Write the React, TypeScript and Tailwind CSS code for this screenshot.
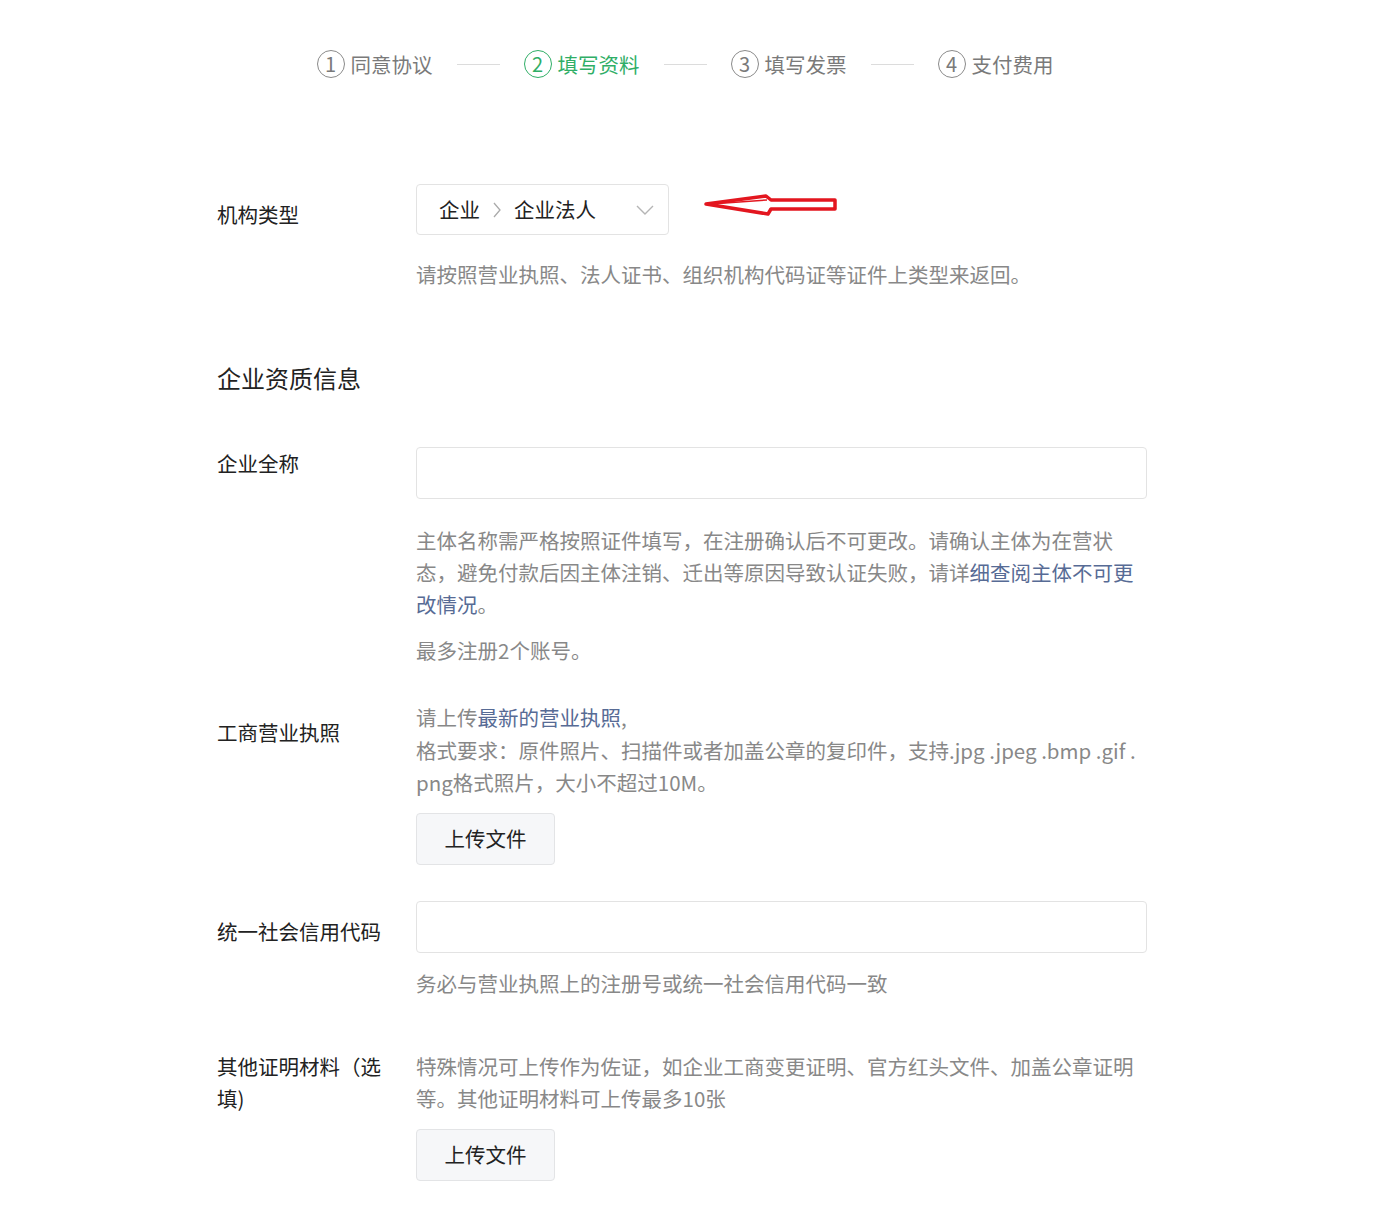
import React from "react";

const steps = ["同意协议", "填写资料", "填写发票", "支付费用"];

function Steps() {
  return (
    <div className="flex items-center justify-center gap-6 pl-[6px] pt-[48px]">
      {steps.map((s, i) => {
        const active = i === 1;
        return (
          <React.Fragment key={s}>
            {i > 0 && <div className="h-px w-[43px] bg-[#dcdcdc]" />}
            <div className="flex items-center gap-[6px]">
              <span
                className={
                  active
                    ? "flex h-[28px] w-[28px] items-center justify-center rounded-full border-[1.5px] border-[#2fae66] text-[20px] leading-none text-[#2fae66]"
                    : "flex h-[28px] w-[28px] items-center justify-center rounded-full border-[1.5px] border-[#8a8a8a] text-[20px] leading-none text-[#7a7a7a]"
                }
              >
                {i + 1}
              </span>
              <span
                className={
                  active
                    ? "text-[20.5px] leading-[32px] text-[#2fae66]"
                    : "text-[20.5px] leading-[32px] text-[#7a7a7a]"
                }
              >
                {s}
              </span>
            </div>
          </React.Fragment>
        );
      })}
    </div>
  );
}

function RedArrow() {
  return (
    <svg width="136" height="24" viewBox="0 0 136 24" className="ml-[34px] -mt-[10px] shrink-0">
      <path
        d="M3 11 L63 3 L68 7 L132 7 L132 16 L68 16 L65 21 Z"
        fill="white"
        stroke="#e3161f"
        strokeWidth="3.5"
        strokeLinejoin="round"
      />
      <path d="M8 11 L64 7" stroke="#e3161f" strokeWidth="1.5" fill="none" />
    </svg>
  );
}

function UploadButton() {
  return (
    <button className="h-[52px] w-[139px] rounded-[4px] border border-[#e3e4e6] bg-[#f6f7f9] text-[20.5px] text-[#222]">
      上传文件
    </button>
  );
}

const label = "w-[199px] shrink-0 pr-[20px] text-[20.5px] leading-[32px] text-[#222]";
const help = "text-[20.5px] leading-[32px] text-[#888]";
const link = "text-[#576b95]";

export default function App() {
  return (
    <div
      className="min-h-[1224px] bg-white"
      style={{ fontFamily: '"Noto Sans CJK SC", "Noto Sans", sans-serif' }}
    >
      <div className="mx-[217px] w-[930px] pb-[44px]">
        <Steps />

        {/* 机构类型 */}
        <div className="mt-[104px] flex">
          <div className={`${label} pt-[14px]`}>机构类型</div>
          <div className="flex-1">
            <div className="flex items-center">
              <div className="flex h-[51px] w-[253px] items-center rounded-[4px] border border-[#e3e3e3] pl-[22px] pr-[14px] text-[20.5px] text-[#222]">
                <span>企业</span>
                <svg width="10" height="16" viewBox="0 0 10 16" className="mx-[12px]">
                  <path d="M2 1 L8 8 L2 15" stroke="#aaa" strokeWidth="1.3" fill="none" />
                </svg>
                <span>企业法人</span>
                <svg width="18" height="10" viewBox="0 0 18 10" className="ml-auto">
                  <path d="M1 1 L9 9 L17 1" stroke="#b5b5b5" strokeWidth="1.4" fill="none" />
                </svg>
              </div>
              <RedArrow />
            </div>
            <p className={`${help} mt-[23px]`}>
              请按照营业执照、法人证书、组织机构代码证等证件上类型来返回。
            </p>
          </div>
        </div>

        <h2 className="mt-[72px] text-[24px] leading-[32px] font-normal text-[#222]">企业资质信息</h2>

        {/* 企业全称 */}
        <div className="mt-[53px] flex">
          <div className={label}>企业全称</div>
          <div className="flex-1">
            <div className="h-[52px] w-[731px] rounded-[4px] border border-[#e3e3e3]" />
            <p className={`${help} mt-[25px]`}>
              主体名称需严格按照证件填写，在注册确认后不可更改。请确认主体为在营状态，避免付款后因主体注销、迁出等原因导致认证失败，请详
              <span className={link}>细查阅主体不可更改情况</span>。
            </p>
            <p className={`${help} mt-[14px]`}>最多注册2个账号。</p>
          </div>
        </div>

        {/* 工商营业执照 */}
        <div className="mt-[35px] flex">
          <div className={`${label} pt-[15px]`}>工商营业执照</div>
          <div className="flex-1">
            <p className="text-[20.5px] leading-[32.5px] text-[#888]">
              请上传<span className={link}>最新的营业执照</span>,
              <br />
              <span className="whitespace-nowrap">
                格式要求：原件照片、扫描件或者加盖公章的复印件，支持.jpg .jpeg .bmp .gif .
              </span>
              <br />
              png格式照片，大小不超过10M。
            </p>
            <div className="mt-[14px]">
              <UploadButton />
            </div>
          </div>
        </div>

        {/* 统一社会信用代码 */}
        <div className="mt-[36px] flex">
          <div className={`${label} pt-[14px]`}>统一社会信用代码</div>
          <div className="flex-1">
            <div className="h-[52px] w-[731px] rounded-[4px] border border-[#e3e3e3]" />
            <p className={`${help} mt-[14px]`}>务必与营业执照上的注册号或统一社会信用代码一致</p>
          </div>
        </div>

        {/* 其他证明材料 */}
        <div className="mt-[51px] flex">
          <div className={label}>其他证明材料（选填)</div>
          <div className="flex-1">
            <p className={help}>
              特殊情况可上传作为佐证，如企业工商变更证明、官方红头文件、加盖公章证明等。其他证明材料可上传最多10张
            </p>
            <div className="mt-[15px]">
              <UploadButton />
            </div>
          </div>
        </div>
      </div>
    </div>
  );
}
